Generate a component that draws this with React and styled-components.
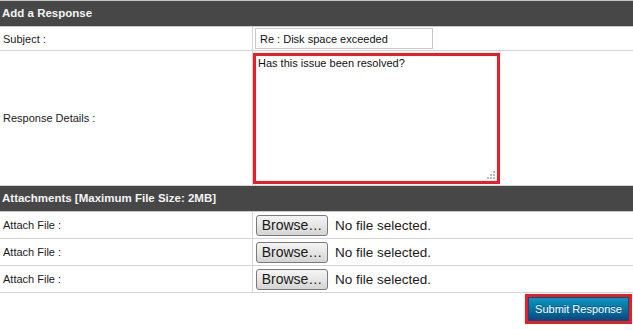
import styled, { createGlobalStyle } from "styled-components";

const GlobalStyle = createGlobalStyle`
  body {
    margin: 0;
    background: #ffffff;
    font-family: "Liberation Sans", Arial, sans-serif;
    font-size: 11px;
    color: #1a1a1a;
  }
`;

const Form = styled.form`
  width: 633px;
  border-top: 1px solid #c4c4c4;
`;

const SectionHeader = styled.div`
  height: 25px;
  line-height: 25px;
  padding-left: 2px;
  background: #474747;
  color: #f4f4f4;
  font-size: 11.5px;
  font-weight: bold;
  border-bottom: 1px solid #c9c9c9;
`;

const Row = styled.div`
  display: grid;
  grid-template-columns: 253px 1fr;
  height: ${({ $height }) => $height}px;
  border-bottom: 1px solid #d4d4d4;
`;

const Label = styled.div`
  display: flex;
  align-items: center;
  padding-left: 3px;
  border-right: 1px solid #d4d4d4;
`;

const Value = styled.div`
  display: flex;
  align-items: ${({ $top }) => ($top ? "flex-start" : "center")};
  gap: 7px;
  padding-left: ${({ $pad }) => $pad}px;
  padding-top: ${({ $top }) => ($top ? 2 : 0)}px;
`;

const TextInput = styled.input`
  box-sizing: border-box;
  width: 178px;
  height: 21px;
  padding: 0 4px;
  border: 1px solid #c8c8c8;
  font-family: "Liberation Sans", Arial, sans-serif;
  font-size: 11px;
  color: #111;
  outline: none;
`;

const AreaWrap = styled.div`
  position: relative;
  width: 247px;
  height: 131px;
`;

const TextArea = styled.textarea`
  box-sizing: border-box;
  width: 100%;
  height: 100%;
  margin: 0;
  padding: 1px 2px;
  border: 3px solid #ec1c26;
  resize: none;
  outline: none;
  font-family: "Liberation Sans", Arial, sans-serif;
  font-size: 11px;
  color: #111;
`;

const Grip = styled.svg`
  position: absolute;
  right: 4px;
  bottom: 4px;
`;

const BrowseButton = styled.button`
  box-sizing: border-box;
  width: 72px;
  height: 21px;
  padding: 0;
  border: 1px solid #7a7a7a;
  border-radius: 3px;
  background: linear-gradient(#f4f4f4, #e6e6e6 50%, #d4d4d4);
  font-family: "Liberation Sans", Arial, sans-serif;
  font-size: 14px;
  color: #1a1a1a;
`;

const FileName = styled.span`
  font-size: 13.5px;
  color: #1a1a1a;
`;

const Footer = styled.div`
  display: flex;
  justify-content: flex-end;
  padding: 1px 1px 0 0;
`;

const Highlight = styled.div`
  border: 3px solid #ec1c26;
`;

const SubmitButton = styled.button`
  box-sizing: border-box;
  display: block;
  width: 101px;
  height: 24px;
  padding: 0;
  border: 1px solid #0a4f7e;
  background: linear-gradient(#0a97c0, #0872a3 50%, #064a80);
  color: #ffffff;
  font-family: "Liberation Sans", Arial, sans-serif;
  font-size: 11px;
  text-shadow: 0 -1px 0 rgba(0, 0, 0, 0.3);
`;

const ATTACHMENTS = [1, 2, 3];

export default function App() {
  return (
    <>
      <GlobalStyle />
      <Form onSubmit={(e) => e.preventDefault()}>
        <SectionHeader>Add a Response</SectionHeader>
        <Row $height={23}>
          <Label>Subject :</Label>
          <Value $pad={2}>
            <TextInput defaultValue="Re : Disk space exceeded" />
          </Value>
        </Row>
        <Row $height={134}>
          <Label>Response Details :</Label>
          <Value $pad={0} $top>
            <AreaWrap>
              <TextArea defaultValue="Has this issue been resolved?" />
              <Grip width="9" height="9" viewBox="0 0 9 9">
                <g fill="#bdbdbd">
                  <rect x="6" y="0" width="2" height="2" />
                  <rect x="6" y="3" width="2" height="2" />
                  <rect x="3" y="3" width="2" height="2" />
                  <rect x="6" y="6" width="2" height="2" />
                  <rect x="3" y="6" width="2" height="2" />
                  <rect x="0" y="6" width="2" height="2" />
                </g>
              </Grip>
            </AreaWrap>
          </Value>
        </Row>
        <SectionHeader>Attachments [Maximum File Size: 2MB]</SectionHeader>
        {ATTACHMENTS.map((n) => (
          <Row key={n} $height={26}>
            <Label>Attach File :</Label>
            <Value $pad={3}>
              <BrowseButton type="button">Browse…</BrowseButton>
              <FileName>No file selected.</FileName>
            </Value>
          </Row>
        ))}
        <Footer>
          <Highlight>
            <SubmitButton type="submit">Submit Response</SubmitButton>
          </Highlight>
        </Footer>
      </Form>
    </>
  );
}
